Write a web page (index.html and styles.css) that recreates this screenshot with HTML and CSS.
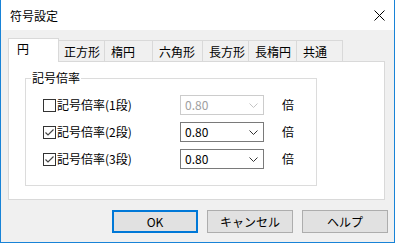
FILE: index.html
```
<!DOCTYPE html>
<html lang="ja">
  <head>
    <meta charset="UTF-8" />
    <title>符号設定</title>
    <link rel="stylesheet" href="styles.css">
  </head>
  <body>
    <div class="window">
      <div class="titlebar">
        <span class="title">符号設定</span>
        <svg class="close" width="11" height="11" viewBox="0 0 11 11">
          <path d="M0.5 0.5 L10.5 10.5 M10.5 0.5 L0.5 10.5" stroke="#000" stroke-width="1" fill="none" />
        </svg>
      </div>
      <div class="client">
        <div class="tabs">
          <div class="tab active">円</div>
          <div class="tab">正方形</div>
          <div class="tab">楕円</div>
          <div class="tab">六角形</div>
          <div class="tab">長方形</div>
          <div class="tab">長楕円</div>
          <div class="tab">共通</div>
        </div>
        <div class="panel">
          <fieldset class="group">
            <legend>記号倍率</legend>
            <div class="row">
              <span class="check"></span>
              <span class="label">記号倍率(1段)</span>
              <div class="combo disabled">
                <span>0.80</span>
                <svg width="9" height="5" viewBox="0 0 9 5"><polyline points="0.5,0.5 4.5,4.5 8.5,0.5" fill="none" stroke="#c4c4c4" stroke-width="1" /></svg>
              </div>
              <span class="unit">倍</span>
            </div>
            <div class="row">
              <span class="check">
                <svg width="11" height="11" viewBox="0 0 11 11"><polyline points="1.5,5.5 4,8 9.5,2.5" fill="none" stroke="#444" stroke-width="1.2" /></svg>
              </span>
              <span class="label">記号倍率(2段)</span>
              <div class="combo">
                <span>0.80</span>
                <svg width="9" height="5" viewBox="0 0 9 5"><polyline points="0.5,0.5 4.5,4.5 8.5,0.5" fill="none" stroke="#333" stroke-width="1" /></svg>
              </div>
              <span class="unit">倍</span>
            </div>
            <div class="row">
              <span class="check">
                <svg width="11" height="11" viewBox="0 0 11 11"><polyline points="1.5,5.5 4,8 9.5,2.5" fill="none" stroke="#444" stroke-width="1.2" /></svg>
              </span>
              <span class="label">記号倍率(3段)</span>
              <div class="combo">
                <span>0.80</span>
                <svg width="9" height="5" viewBox="0 0 9 5"><polyline points="0.5,0.5 4.5,4.5 8.5,0.5" fill="none" stroke="#333" stroke-width="1" /></svg>
              </div>
              <span class="unit">倍</span>
            </div>
          </fieldset>
        </div>
        <div class="buttons">
          <button class="btn default">OK</button>
          <button class="btn">キャンセル</button>
          <button class="btn">ヘルプ</button>
        </div>
      </div>
    </div>
  </body>
</html>
```

FILE: styles.css
```
body {
  margin: 0;
  font-family: "Noto Sans CJK JP", "Noto Sans", sans-serif;
  font-size: 12px;
  color: #000;
  background-color: #fff;
}
.window {
  width: 395px;
  height: 243px;
  box-sizing: border-box;
  border: 1px solid #1883d7;
  border-top: none;
  display: flex;
  flex-direction: column;
}
.titlebar {
  height: 30px;
  background-color: #fff;
  display: flex;
  align-items: center;
  justify-content: space-between;
  padding: 0 9px 0 9px;
}
.title {
  line-height: 14px;
  padding-top: 1px;
}
.close {
  display: block;
}
.client {
  flex: 1;
  background-color: #f0f0f0;
  padding-top: 8px;
}
.tabs {
  display: flex;
  align-items: flex-end;
  height: 23px;
  margin-left: 7px;
}
.tab {
  box-sizing: border-box;
  height: 21px;
  padding: 4px 0 0 6px;
  line-height: 14px;
  border-top: 1px solid #d9d9d9;
  border-right: 1px solid #d9d9d9;
  background-color: #f0f0f0;
}
.tab:nth-child(2) { width: 46px; padding-left: 5px; }
.tab:nth-child(3) { width: 48px; }
.tab:nth-child(4) { width: 50px; }
.tab:nth-child(5) { width: 46px; }
.tab:nth-child(6) { width: 48px; }
.tab:nth-child(7) { width: 46px; }
.tab.active {
  width: 51px;
  height: 24px;
  margin-bottom: -1px;
  padding: 3px 0 0 8px;
  border-left: 1px solid #d9d9d9;
  background-color: #fff;
  position: relative;
  z-index: 1;
}
.panel {
  height: 139px;
  box-sizing: border-box;
  margin: 0 9px 0 7px;
  background-color: #fff;
  border: 1px solid #d9d9d9;
}
.group {
  width: 292px;
  box-sizing: border-box;
  margin: 9px 0 0 16px;
  padding: 10px 0 16px 0;
  border: 1px solid #dcdcdc;
  min-width: 0;
}
.group legend {
  margin-left: 5px;
  padding: 0 1px;
  line-height: 14px;
}
.row {
  display: flex;
  align-items: center;
  height: 20px;
  margin-left: 17px;
  margin-bottom: 7px;
}
.row:last-child {
  margin-bottom: 0;
}
.check {
  width: 13px;
  height: 13px;
  box-sizing: border-box;
  border: 1px solid #333;
  background-color: #fff;
  margin-right: 1px;
  display: flex;
  align-items: center;
  justify-content: center;
}
.check svg {
  display: block;
}
.label {
  width: 123px;
  line-height: 14px;
}
.combo {
  width: 84px;
  height: 20px;
  box-sizing: border-box;
  border: 1px solid #7a7a7a;
  background-color: #fff;
  display: flex;
  align-items: center;
  justify-content: space-between;
  padding: 0 5px 0 4px;
  line-height: 14px;
}
.combo svg {
  display: block;
}
.combo.disabled {
  border-color: #cccccc;
  color: #a0a0a0;
}
.unit {
  margin-left: 18px;
  line-height: 14px;
}
.buttons {
  display: flex;
  justify-content: flex-end;
  gap: 9px;
  margin-top: 10px;
  padding-right: 6px;
}
.btn {
  width: 86px;
  height: 23px;
  box-sizing: border-box;
  border: 1px solid #adadad;
  background-color: #e1e1e1;
  font-family: "Noto Sans CJK JP", "Noto Sans", sans-serif;
  font-size: 12px;
  color: #000;
  padding: 0;
  line-height: 14px;
}
.btn.default {
  border: 2px solid #0078d7;
}
```
